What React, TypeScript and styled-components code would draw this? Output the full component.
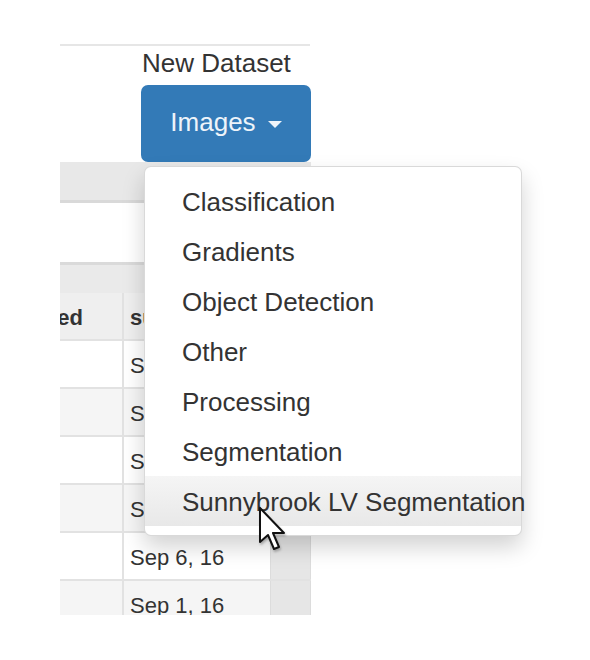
import styled, { createGlobalStyle } from 'styled-components';

const GlobalStyle = createGlobalStyle`
  body {
    margin: 0;
    background: #fff;
    font-family: 'Liberation Sans', Arial, sans-serif;
    color: #333;
  }
`;

const Page = styled.div`
  width: 590px;
  height: 660px;
  position: relative;
  overflow: hidden;
  background: #fff;
`;

const Frame = styled.div`
  margin-left: 60px;
  width: 251px;
  padding-top: 44px;
  display: flex;
  flex-direction: column;
`;

const TopRule = styled.div`
  height: 2px;
  margin-right: 1px;
  background: #e6e6e6;
`;

const Toolbar = styled.div`
  display: flex;
  justify-content: flex-end;
  position: relative;
  z-index: 2;
`;

const Group = styled.div`
  position: relative;
  width: 170px;
  display: flex;
  flex-direction: column;
`;

const Label = styled.div`
  height: 35px;
  line-height: 35px;
  padding-left: 1px;
  font-size: 26px;
  color: #333;
  white-space: nowrap;
`;

const Button = styled.button`
  margin-top: 4px;
  height: 77px;
  border: 0;
  border-radius: 7px;
  background: #337ab7;
  color: #eef4fa;
  font-family: inherit;
  font-size: 26px;
  display: flex;
  align-items: center;
  justify-content: center;
  padding: 0 0 3px 0;
  cursor: pointer;
`;

const Caret = styled.span`
  display: inline-block;
  width: 0;
  height: 0;
  margin-left: 12px;
  margin-top: 4px;
  border-top: 7px solid #eef4fa;
  border-left: 7px solid transparent;
  border-right: 7px solid transparent;
`;

const Menu = styled.ul`
  position: absolute;
  top: calc(100% + 4px);
  left: 3px;
  width: 376px;
  margin: 0;
  padding: 9px 0;
  list-style: none;
  background: #fff;
  border: 1px solid rgba(0, 0, 0, 0.15);
  border-radius: 7px;
  box-shadow: 0 11px 22px rgba(0, 0, 0, 0.175);
`;

const MenuItem = styled.li<{ $hover?: boolean }>`
  position: relative;
  height: 50px;
  line-height: 52px;
  padding: 0 37px;
  font-size: 26px;
  color: #333;
  white-space: nowrap;
  background: ${(p) =>
    p.$hover ? 'linear-gradient(to bottom, #f5f5f5 0%, #e8e8e8 100%)' : 'transparent'};
`;

const Pointer = styled.svg`
  position: absolute;
  left: 113px;
  top: 30px;
  filter: drop-shadow(1px 2px 1px rgba(0, 0, 0, 0.25));
`;

const PanelHeading = styled.div`
  height: 38px;
  background: #e8e8e8;
  border-bottom: 3px solid #d9d9d9;
`;

const PanelBody = styled.div`
  height: 59px;
  background: #fff;
  border-bottom: 3px solid #dadada;
`;

const TableBar = styled.div`
  height: 28px;
  background: #eaeaea;
`;

const Table = styled.div`
  height: 322px;
  overflow: hidden;
`;

const Row = styled.div<{ $tone: 'head' | 'odd' | 'even' }>`
  display: grid;
  grid-template-columns: 62px 148px 41px;
  height: 46px;
  border-bottom: 2px solid #e2e2e2;
  background: ${(p) => (p.$tone === 'head' ? '#efefef' : p.$tone === 'even' ? '#f5f5f5' : '#fff')};
  font-size: 22px;
  font-weight: ${(p) => (p.$tone === 'head' ? 700 : 400)};
  color: #333;
`;

const Cell = styled.div<{ $end?: boolean }>`
  display: flex;
  align-items: center;
  overflow: hidden;
  white-space: nowrap;
  padding-top: 3px;
  justify-content: ${(p) => (p.$end ? 'flex-end' : 'flex-start')};
  padding-right: ${(p) => (p.$end ? '39px' : '0')};
`;

const DateCell = styled(Cell)`
  border-left: 2px solid #e2e2e2;
  padding-left: 6px;
`;

const SideCell = styled.div`
  background: #e6e6e6;
  border-left: 1px solid #dcdcdc;
  border-right: 1px solid #dcdcdc;
`;

const categories = [
  'Classification',
  'Gradients',
  'Object Detection',
  'Other',
  'Processing',
  'Segmentation',
  'Sunnybrook LV Segmentation',
];

const dates = ['Sep 14, 16', 'Sep 13, 16', 'Sep 12, 16', 'Sep 9, 16', 'Sep 6, 16', 'Sep 1, 16'];

export default function App() {
  return (
    <Page>
      <GlobalStyle />
      <Frame>
        <TopRule />
        <Toolbar>
          <Group>
            <Label>New Dataset</Label>
            <Button>
              Images <Caret />
            </Button>
            <Menu>
              {categories.map((c, i) => (
                <MenuItem key={c} $hover={i === categories.length - 1}>
                  {c}
                  {i === categories.length - 1 && (
                    <Pointer width="30" height="46" viewBox="0 0 30 46">
                      <path
                        d="M2 2 L2 36 L10 29 L16 43 L21 41 L15 27 L26 27 Z"
                        fill="#fff"
                        stroke="#111"
                        strokeWidth="2"
                        strokeLinejoin="round"
                      />
                    </Pointer>
                  )}
                </MenuItem>
              ))}
            </Menu>
          </Group>
        </Toolbar>
        <PanelHeading />
        <PanelBody />
        <TableBar />
        <Table>
          <Row $tone="head">
            <Cell $end>refreshed</Cell>
            <DateCell>submitted</DateCell>
            <SideCell />
          </Row>
          {dates.map((d, i) => (
            <Row key={d} $tone={i % 2 === 0 ? 'odd' : 'even'}>
              <Cell />
              <DateCell>{d}</DateCell>
              <SideCell />
            </Row>
          ))}
        </Table>
      </Frame>
    </Page>
  );
}
